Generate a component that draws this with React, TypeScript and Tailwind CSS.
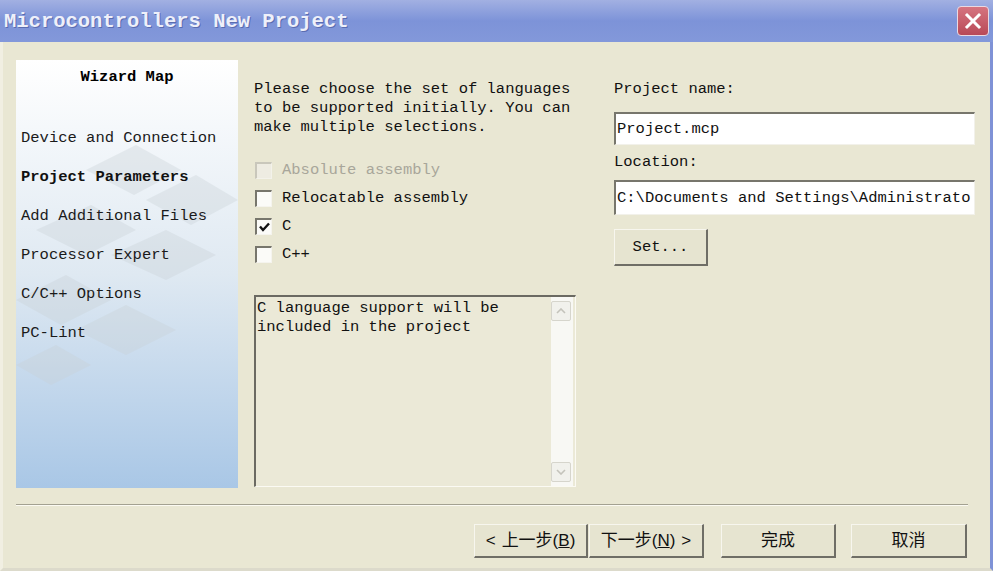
import React from "react";

const mono = "font-['Liberation_Mono','DejaVu_Sans_Mono',monospace]";
const cjk = "font-['Liberation_Sans','Noto_Sans_CJK_SC',sans-serif]";

const steps = [
  { label: "Device and Connection", active: false },
  { label: "Project Parameters", active: true },
  { label: "Add Additional Files", active: false },
  { label: "Processor Expert", active: false },
  { label: "C/C++ Options", active: false },
  { label: "PC-Lint", active: false },
];

function CheckBox({ checked, disabled }: { checked?: boolean; disabled?: boolean }) {
  return (
    <span
      className={`flex h-[17px] w-[17px] shrink-0 items-center justify-center border-l-2 border-t-2 border-r border-b ${
        disabled
          ? "border-l-[#c9c7bb] border-t-[#c9c7bb] border-r-[#f3f2ea] border-b-[#f3f2ea] bg-[#eeece2]"
          : "border-l-[#77766c] border-t-[#77766c] border-r-[#f5f4ee] border-b-[#f5f4ee] bg-[#fbfbf8]"
      }`}
    >
      {checked && (
        <svg width="11" height="10" viewBox="0 0 11 10">
          <path d="M1 4.5 L4 8 L10 1.5" fill="none" stroke="#111" strokeWidth="2.4" />
        </svg>
      )}
    </span>
  );
}

function Option({ label, checked, disabled }: { label: string; checked?: boolean; disabled?: boolean }) {
  return (
    <div className="flex h-[28px] items-center gap-[10px] pl-[1px]">
      <CheckBox checked={checked} disabled={disabled} />
      <span className={disabled ? "text-[#a8a69a]" : "text-[#111]"}>{label}</span>
    </div>
  );
}

function XpButton({ children, className = "" }: { children: React.ReactNode; className?: string }) {
  return (
    <button
      type="button"
      className={`flex items-center justify-center border-l border-t border-r-2 border-b-2 border-l-[#f7f6ee] border-t-[#f7f6ee] border-r-[#6f6e66] border-b-[#6f6e66] bg-[#e6e4d0] text-[#111] ${className}`}
    >
      {children}
    </button>
  );
}

function ScrollArrow({ up }: { up?: boolean }) {
  return (
    <div className="flex h-[20px] w-[20px] items-center justify-center rounded-[2px] border border-[#d6d5cc] bg-[#f1f1ec]">
      <svg width="10" height="6" viewBox="0 0 10 6">
        <path d={up ? "M1 5 L5 1 L9 5" : "M1 1 L5 5 L9 1"} fill="none" stroke="#c4c3bb" strokeWidth="1.6" />
      </svg>
    </div>
  );
}

export default function App() {
  return (
    <div className={`flex h-[571px] w-[993px] flex-col overflow-hidden bg-[#e9e7d3] ${mono} text-[15.5px] leading-[19px]`}>
      {/* title bar */}
      <div className="flex h-[42px] shrink-0 items-center justify-between bg-gradient-to-b from-[#a2b0e2] via-[#7d93d8] to-[#8398da] pl-[4px] pr-[4px]">
        <span className="text-[20.5px] font-bold tracking-[0px] text-[#eef0fa] [text-shadow:1px_1px_0_#5a6cb0]">
          Microcontrollers New Project
        </span>
        <div className="flex h-[30px] w-[32px] items-center justify-center rounded-[4px] border border-[#e9d9e2] bg-gradient-to-b from-[#d67480] to-[#b84957]">
          <svg width="18" height="18" viewBox="0 0 18 18">
            <path d="M3 3 L15 15 M15 3 L3 15" stroke="#fff" strokeWidth="3" strokeLinecap="square" />
          </svg>
        </div>
      </div>

      <div className="flex flex-1 flex-col border-l-[3px] border-r-[3px] border-b-[3px] border-l-[#f1efe2] border-r-[#7f92d6] border-b-[#dcdacb]">
        <div className="flex pl-[13px] pt-[18px]">
          {/* wizard map */}
          <div className="relative h-[428px] w-[222px] shrink-0 overflow-hidden bg-gradient-to-b from-[#ffffff] via-[#dfe9f2] to-[#a9c7e6]">
            <svg className="absolute left-0 top-0" width="222" height="428" viewBox="0 0 222 428">
              <g fill="#c9d1d6" opacity="0.35">
                <path d="M70 110 L120 85 L165 110 L118 135 Z" />
                <path d="M130 140 L180 115 L222 140 L175 165 Z" />
                <path d="M20 170 L75 145 L120 170 L70 195 Z" />
                <path d="M95 195 L150 170 L200 195 L150 220 Z" />
                <path d="M0 240 L50 215 L95 240 L45 265 Z" />
                <path d="M60 270 L110 245 L160 270 L110 295 Z" />
                <path d="M0 305 L40 285 L75 305 L35 325 Z" />
              </g>
            </svg>
            <div className="relative flex flex-col">
              <div className="pt-[8px] text-center font-bold">Wizard Map</div>
              <div className="mt-[42px] flex flex-col gap-[20px] pl-[5px]">
                {steps.map((s) => (
                  <div key={s.label} className={s.active ? "font-bold text-[#111]" : "text-[#1a1a1a]"}>
                    {s.label}
                  </div>
                ))}
              </div>
            </div>
          </div>

          {/* languages */}
          <div className="ml-[16px] flex w-[322px] shrink-0 flex-col">
            <p className="pt-[20px] text-[#111]">
              Please choose the set of languages
              <br />
              to be supported initially. You can
              <br />
              make multiple selections.
            </p>
            <div className="mt-[19px] flex flex-col">
              <Option label="Absolute assembly" disabled />
              <Option label="Relocatable assembly" />
              <Option label="C" checked />
              <Option label="C++" />
            </div>
            <div className="mt-[27px] flex h-[192px] border-l-2 border-t-2 border-r border-b border-l-[#6b6a62] border-t-[#6b6a62] border-r-[#fbfaf3] border-b-[#fbfaf3] bg-[#ebe9d7]">
              <div className="flex-1 pl-[1px] pt-[2px] text-[#111]">
                C language support will be
                <br />
                included in the project
              </div>
              <div className="mr-[2px] flex w-[22px] flex-col justify-between bg-[#f8f8f4] py-[4px]">
                <ScrollArrow up />
                <ScrollArrow />
              </div>
            </div>
          </div>

          {/* project name/location */}
          <div className="ml-[38px] flex w-[361px] shrink-0 flex-col">
            <div className="pt-[20px] text-[#111]">Project name:</div>
            <div className="mt-[13px] flex h-[33px] items-center border-l-2 border-t-2 border-r border-b border-l-[#77766c] border-t-[#77766c] border-r-[#f2f1ea] border-b-[#f2f1ea] bg-white pl-[1px] text-[#111]">
              Project.mcp
            </div>
            <div className="mt-[8px] text-[#111]">Location:</div>
            <div className="mt-[8px] flex h-[35px] items-center overflow-hidden whitespace-nowrap border-l-2 border-t-2 border-r border-b border-l-[#77766c] border-t-[#77766c] border-r-[#f2f1ea] border-b-[#f2f1ea] bg-white pl-[1px] text-[#111]">
              C:\Documents and Settings\Administrato
            </div>
            <XpButton className="mt-[14px] h-[37px] w-[94px]">Set...</XpButton>
          </div>
        </div>

        {/* separator */}
        <div className="ml-[13px] mr-[22px] mt-[16px] h-[2px] border-t border-b border-t-[#a3a191] border-b-[#fbfaf2]" />

        {/* footer buttons */}
        <div className={`mt-[18px] flex pl-[471px] ${cjk} text-[17px]`}>
          <XpButton className="h-[34px] w-[114px] gap-[6px]">
            <span>&lt;</span>
            <span>上一步(<span className="underline">B</span>)</span>
          </XpButton>
          <XpButton className="ml-[1px] h-[34px] w-[115px] gap-[6px]">
            <span>下一步(<span className="underline">N</span>)</span>
            <span>&gt;</span>
          </XpButton>
          <XpButton className="ml-[17px] h-[34px] w-[115px]">完成</XpButton>
          <XpButton className="ml-[15px] h-[34px] w-[116px]">取消</XpButton>
        </div>
      </div>
    </div>
  );
}
